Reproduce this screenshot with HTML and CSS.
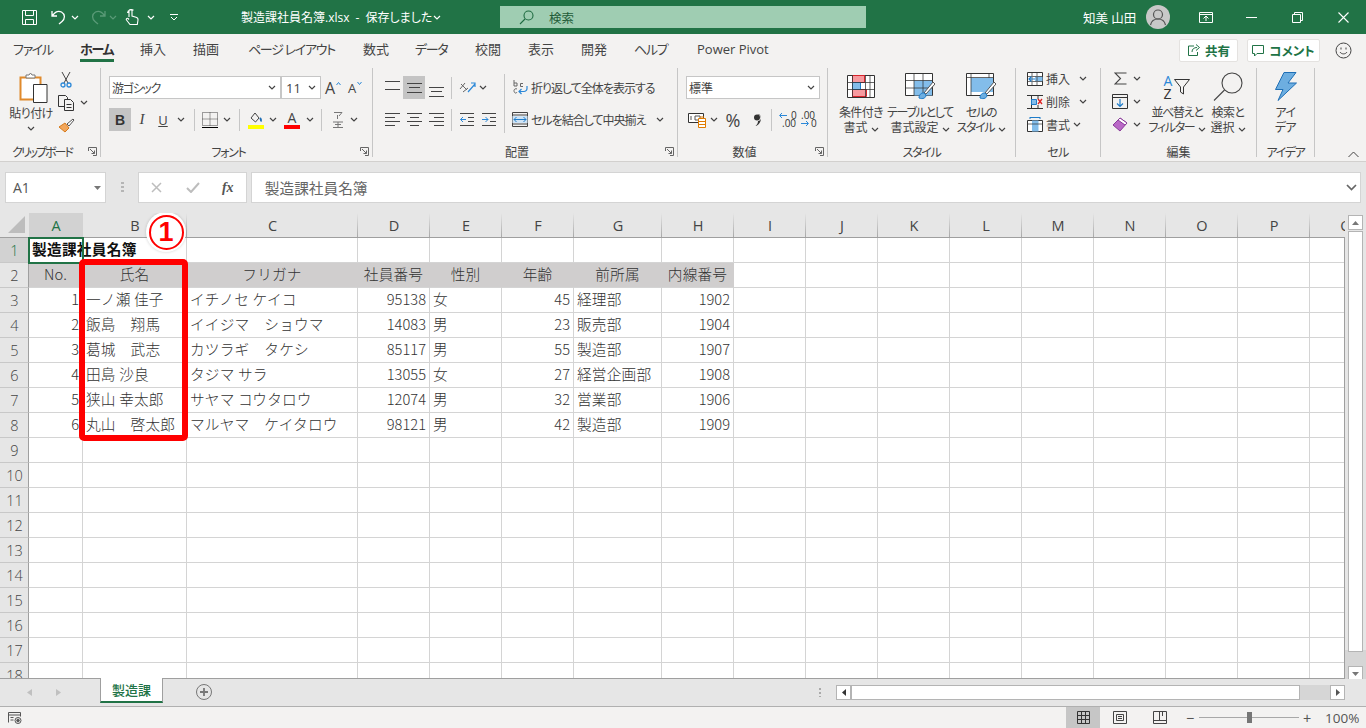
FILE: index.html
```html
<!DOCTYPE html>
<html lang="ja">
<head>
<meta charset="utf-8">
<title>製造課社員名簿.xlsx - Excel</title>
<link rel="stylesheet" href="styles.css">
</head>
<body>
<svg class="defs" width="0" height="0"><symbol id="ch" viewBox="0 0 8 5"><path d="M1 1l3 3 3-3" fill="none" stroke="currentColor" stroke-width="1.2"/></symbol><symbol id="launch" viewBox="0 0 9 9"><path d="M.5 4V.5h8v8H5M2 2l4.500 4.500M6.500 3.500v3h-3" fill="none" stroke="#666"/></symbol></svg>
<div class="app">
<header class="titlebar">
  <div class="qat">
    <svg class="q-save" width="17" height="17" viewBox="0 0 17 17" fill="none" stroke="#fff"><path d="M1.500 1.500h14v14h-14zM4.500 1.500v5h8v-5M4.500 15.500v-5h8v5"/></svg>
    <svg class="q-undo" width="16" height="16" viewBox="0 0 16 16" fill="none" stroke="#fff" stroke-width="1.300"><path d="M1 2v5h5M1.500 6.500C4 3 7.500 1.500 10.500 3c3.500 2 4 6.500.5 9.500l-3 2.500"/></svg>
    <svg class="chev q-c1"><use href="#ch"/></svg>
    <svg class="q-redo" width="16" height="16" viewBox="0 0 16 16" fill="none" stroke="#5a9a77" stroke-width="1.300"><path d="M15 2v5h-5M14.500 6.500C12 3 8.500 1.500 5.500 3 2 5 1.500 9.500 5 12.500L8 15"/></svg>
    <svg class="chev q-c2 dim"><use href="#ch"/></svg>
    <svg class="q-touch" width="14" height="18" viewBox="0 0 14 18" fill="none" stroke="#fff" stroke-width="1.100"><path d="M4 9V3a1.500 1.500 0 0 1 3 0v5l4 1.200c1.500.5 2.200 1.300 2 2.800l-.7 4.500H5L1.500 12c-.8-1 .5-2.300 1.500-1.500L4 11.500M2.500 5a4 4 0 0 1 6-2.800"/></svg>
    <svg class="chev q-c3"><use href="#ch"/></svg>
    <svg class="q-more" width="8" height="7" viewBox="0 0 8 7" fill="none" stroke="#fff"><path d="M0 .5h8M1 3l3 3 3-3"/></svg>
  </div>
  <div class="doc-title">製造課社員名簿.xlsx - 保存しました</div>
  <svg class="chev doc-ch"><use href="#ch"/></svg>
  <div class="search">
    <svg width="15" height="15" viewBox="0 0 15 15" fill="none" stroke="#1f6b41" stroke-width="1.100"><circle cx="9.500" cy="5.500" r="4.500"/><path d="M6 9l-5 5"/></svg>
    <span>検索</span>
  </div>
  <div class="user">知美 山田</div>
  <div class="avatar"><svg width="24" height="24" viewBox="0 0 24 24" fill="none" stroke="#555" stroke-width="1.200"><circle cx="12" cy="9.500" r="4.500"/><path d="M4.500 20c1-4.500 4-6 7.500-6s6.500 1.500 7.500 6"/></svg></div>
  <div class="winbtns">
    <svg width="14" height="11" viewBox="0 0 14 11" fill="none" stroke="#fff"><path d="M.5 .5h13v10H.5zM.5 2.500h13M4.500 6.500L7 4l2.500 2.500M7 4v5"/></svg>
    <svg width="11" height="1" viewBox="0 0 11 1" stroke="#fff"><path d="M0 .5h11"/></svg>
    <svg width="11" height="11" viewBox="0 0 11 11" fill="none" stroke="#fff"><path d="M.5 2.500h8v8h-8zM2.500 2.500v-2h8v8h-2"/></svg>
    <svg width="11" height="11" viewBox="0 0 11 11" fill="none" stroke="#fff" stroke-width="1.100"><path d="M.5 .5l10 10M10.500 .5l-10 10"/></svg>
  </div>
</header>

<nav class="tabs">
  <span class="tab kn t1">ファイル</span>
  <span class="tab kn t2 on">ホーム</span>
  <span class="tab t3">挿入</span>
  <span class="tab t4">描画</span>
  <span class="tab kn t5">ページ レイアウト</span>
  <span class="tab t6">数式</span>
  <span class="tab kn t7">データ</span>
  <span class="tab t8">校閲</span>
  <span class="tab t9">表示</span>
  <span class="tab t10">開発</span>
  <span class="tab kn t11">ヘルプ</span>
  <span class="tab t12">Power Pivot</span>
  <span class="tab-right">
    <span class="pill share"><svg width="14" height="14" viewBox="0 0 14 14" fill="none" stroke="#217346"><path d="M7 3H1.500v9.500h9V9M5 9c0-3 2-4.500 5-4.500M9 1.500l3.500 3-3.500 3"/></svg>共有</span>
    <span class="pill comment"><svg width="13" height="13" viewBox="0 0 13 13" fill="none" stroke="#217346"><path d="M.5 1.500h11v8H5L2.500 12V9.500h-2z"/></svg>コメント</span>
    <svg class="smile" width="17" height="17" viewBox="0 0 17 17" fill="none" stroke="#444"><circle cx="8.500" cy="8.500" r="7.500"/><path d="M5 10c1.500 2.500 5.500 2.500 7 0"/><path d="M6 5.500v2M11 5.500v2"/></svg>
  </span>
</nav>

<section class="ribbon">
  <div class="grp g-clip">
    <div class="gbody clip">
      <div class="paste">
        <svg width="29" height="31" viewBox="0 0 29 31"><path d="M1.500 5.500h20v22h-20z" fill="#fff" stroke="#e08a2c" stroke-width="2"/><path d="M7 5V3h3l1.500-2 1.500 2h3v3H7z" fill="#fff" stroke="#777"/><path d="M14.500 12.500h13.500v18h-13.500z" fill="#fff" stroke="#333"/></svg>
        <div class="lbl tight">貼り付け</div>
        <svg class="chev"><use href="#ch"/></svg>
      </div>
      <div class="clip-col">
        <span class="ci"><svg width="12" height="16" viewBox="0 0 12 16" fill="none"><path d="M2 0l6 11M10 0L4 11" stroke="#444"/><circle cx="3" cy="13" r="2" stroke="#2b88d8" stroke-width="1.300"/><circle cx="9" cy="13" r="2" stroke="#2b88d8" stroke-width="1.300"/></svg></span>
        <span class="ci"><svg class="cp" width="17" height="16" viewBox="0 0 17 16" fill="#f3f2f1" stroke="#333"><path d="M.5 .5h7l2 2v9h-9z"/><path d="M6.500 4.500h6l3 3v8h-9z"/><path d="M8.500 9.500h5M8.500 12.500h5" /></svg><svg class="chev"><use href="#ch"/></svg></span>
        <span class="ci"><svg width="17" height="15" viewBox="0 0 17 15"><path d="M1 9l6-4 4 5-4 4z" fill="#f2a65a" stroke="#d67a1c"/><path d="M9 6l6-5 1 1-5 6z" fill="#fff" stroke="#555"/></svg></span>
      </div>
    </div>
    <div class="glabel kn2">クリップボード<svg class="launch"><use href="#launch"/></svg></div>
  </div>

  <div class="grp g-font">
    <div class="gbody rows2 pl8">
      <div class="rw">
        <span class="sel w172"><span class="seltxt kn">游ゴシック</span><svg class="chev"><use href="#ch"/></svg></span>
        <span class="sel w40"><span class="seltxt num">11</span><svg class="chev"><use href="#ch"/></svg></span>
        <span class="ib w24 aa">A<svg class="up" width="5" height="3" viewBox="0 0 5 3"><path d="M.5 3l2-2.500 2 2.500" fill="none" stroke="#2b88d8"/></svg></span>
        <span class="ib w20 aa sm">A<svg class="up" width="5" height="3" viewBox="0 0 5 3"><path d="M.5 0l2 2.500 2-2.500" fill="none" stroke="#2b88d8"/></svg></span>
      </div>
      <div class="rw">
        <span class="ib w22 sel-on b">B</span>
        <span class="ib w22 i">I</span>
        <span class="ib w20 u">U</span>
        <span class="ib w16"><svg class="chev"><use href="#ch"/></svg></span>
        <span class="vs m5"></span>
        <span class="ib w20"><svg width="16" height="16" viewBox="0 0 16 16" fill="none" stroke="#444" stroke-dasharray="1 1"><path d="M.5 .5h15v13H.5zM8 .5v13M.5 7h15"/><path d="M0 15.500h16" stroke="#000" stroke-dasharray="none"/></svg></span>
        <span class="ib w14"><svg class="chev"><use href="#ch"/></svg></span>
        <span class="vs m6"></span>
        <span class="ib w20"><svg width="16" height="18" viewBox="0 0 16 18"><path d="M3 7l4-5 4 5-3.500 4z" fill="none" stroke="#444"/><path d="M12 7c1 1 1.500 2 1 3.500" fill="none" stroke="#1f6fb5" stroke-width="2"/><path d="M0 14h16v4H0z" fill="#ffff00"/></svg></span>
        <span class="ib w14"><svg class="chev"><use href="#ch"/></svg></span>
        <span class="ib w24 fcolor"><span>A</span><i></i></span>
        <span class="ib w12"><svg class="chev"><use href="#ch"/></svg></span>
        <span class="vs m6"></span>
        <span class="ib w20 phon"><svg width="10" height="18" viewBox="0 0 10 18" fill="none" stroke="#777"><path d="M1 1.500h8L6 5M4.500 4v4M0 11h10M2 13.500h6M0 16.500h10M5 11v5"/></svg></span>
        <span class="ib w12"><svg class="chev"><use href="#ch"/></svg></span>
      </div>
    </div>
    <div class="glabel kn">フォント<svg class="launch"><use href="#launch"/></svg></div>
  </div>

  <div class="grp g-align">
    <div class="gbody align">
      <div class="rows2 al-left">
        <div class="rw">
          <span class="ib w22"><svg class="ln" width="15" height="14" viewBox="0 0 15 14"><path d="M0 .5h15M0 8.500h15"/></svg></span>
          <span class="ib w22 sel-on"><svg class="ln" width="15" height="10" viewBox="0 0 15 10"><path d="M0 .5h15M2 4.500h11M0 9.500h15"/></svg></span>
          <span class="ib w22"><svg class="ln" width="15" height="10" viewBox="0 0 15 10" style="margin-top:8px"><path d="M0 .5h15M2 4.500h11M0 9.500h15"/></svg></span>
          <span class="vs m4"></span>
          <span class="ib w22"><svg width="17" height="15" viewBox="0 0 17 15" fill="none"><path d="M1 9L6 3M2 4l6 6M4 12l5-4" stroke="#666"/><path d="M9 12L16 4M12 3h4v4" stroke="#2b88d8" stroke-width="1.200"/></svg></span>
          <span class="ib w10"><svg class="chev"><use href="#ch"/></svg></span>
        </div>
        <div class="rw">
          <span class="ib w22"><svg class="ln" width="15" height="13" viewBox="0 0 15 13"><path d="M0 .5h15M0 4.500h10M0 8.500h15M0 12.500h10"/></svg></span>
          <span class="ib w22"><svg class="ln" width="15" height="13" viewBox="0 0 15 13"><path d="M0 .5h15M3 4.500h9M0 8.500h15M3 12.500h9"/></svg></span>
          <span class="ib w22"><svg class="ln" width="15" height="13" viewBox="0 0 15 13"><path d="M0 .5h15M5 4.500h10M0 8.500h15M5 12.500h10"/></svg></span>
          <span class="vs m4"></span>
          <span class="ib w22"><svg width="14" height="13" viewBox="0 0 14 13" fill="none" stroke="#444"><path d="M0 .5h14M8 4.500h6M8 8.500h6M0 12.500h14"/><path d="M6 6.500H.5M3 4L.5 6.500 3 9" stroke="#2b88d8"/></svg></span>
          <span class="ib w22"><svg width="14" height="13" viewBox="0 0 14 13" fill="none" stroke="#444"><path d="M0 .5h14M8 4.500h6M8 8.500h6M0 12.500h14"/><path d="M0 6.500h6M3.500 4L6 6.500 3.500 9" stroke="#2b88d8"/></svg></span>
        </div>
      </div>
      <span class="vs tall"></span>
      <div class="rows2 al-right">
        <div class="rw">
          <span class="ib w20"><svg width="15" height="15" viewBox="0 0 15 15" fill="none"><path d="M1 0v6M1 3h3v3H1" stroke="#666"/><path d="M10 3.500H7.500v3H10M4 9a2 2 0 0 0-3 1.500C1 13 3 14 4 12" stroke="#666"/><path d="M14 6v2.500a3 3 0 0 1-3 3H6.500M8.500 9l-2.500 2.500L8.500 14" stroke="#2b88d8" stroke-width="1.200"/></svg></span>
          <span class="rtext wrap">折り返して全体を表示する</span>
        </div>
        <div class="rw">
          <span class="ib w20"><svg width="16" height="15" viewBox="0 0 16 15" fill="none" stroke="#444"><path d="M.5 .5h15v14H.5z"/><path d="M0 3h16M0 12h16" stroke-width="1"/><path d="M.5 4h15v7H.5z" fill="#cfe4f6" stroke="none"/><path d="M2 7.500h12M4.500 5L2 7.500 4.500 10M11.500 5L14 7.500 11.500 10" stroke="#1f7cc9"/></svg></span>
          <span class="rtext merge">セルを結合して中央揃え</span>
          <span class="ib w10"><svg class="chev"><use href="#ch"/></svg></span>
        </div>
      </div>
    </div>
    <div class="glabel">配置<svg class="launch"><use href="#launch"/></svg></div>
  </div>

  <div class="grp g-num">
    <div class="gbody rows2 pl8">
      <div class="rw"><span class="sel w133"><span class="seltxt">標準</span><svg class="chev"><use href="#ch"/></svg></span></div>
      <div class="rw">
        <span class="ib w24"><svg width="20" height="17" viewBox="0 0 20 17"><path d="M.5 2.500h15v9H.5z" fill="#fff" stroke="#333"/><path d="M3 5v4M7 5h5v4H7z" fill="none" stroke="#555"/><path d="M10.500 7.500h7v9h-7z" fill="#fff" stroke="#e07b00"/><path d="M11 10.500h6M11 13.500h6M12 6h4" stroke="#e07b00" fill="none"/></svg></span>
        <span class="ib w8"><svg class="chev"><use href="#ch"/></svg></span>
        <span class="ib w30 pct">%</span>
        <span class="ib w18"><svg width="7" height="12" viewBox="0 0 7 12"><path d="M2.500 0a3.500 3.500 0 0 1 1.500 7C4 9 3 11 1.500 12 5 11 7 7.500 6.800 4.500 6.500 1 4.500 0 2.500 0z" fill="#333"/><circle cx="3" cy="3.500" r="3" fill="#333"/></svg></span>
        <span class="vs m5"></span>
        <span class="ib w22 dec inc"><svg width="15" height="16" viewBox="0 0 15 16" fill="none"><path d="M1 3.500h7M3 1L.5 3.500 3 6" stroke="#2b88d8"/></svg><b class="d1">0</b><b class="d2">.00</b></span>
        <span class="ib w18 dec out"><b class="d3">.00</b><svg width="15" height="16" viewBox="0 0 15 16" fill="none"><path d="M0 12.500h7M5 10l2.500 2.500L5 15" stroke="#2b88d8"/></svg><b class="d4">0</b></span>
      </div>
    </div>
    <div class="glabel">数値<svg class="launch"><use href="#launch"/></svg></div>
  </div>

  <div class="grp g-style">
    <div class="gbody bigs pl8">
      <div class="big w50">
        <div class="bi"><svg width="28" height="23" viewBox="0 0 28 23"><path d="M.5 .5h27v22H.5z" fill="#fff" stroke="#333"/><path d="M5.500 .5h12v7h-12zM5.500 14.500h14v7h-14z" fill="#f79a9f" stroke="#d8232a"/><path d="M5.500 7.500h8v7h-8z" fill="#83bdea" stroke="#1f7cc9"/><path d="M5.500 0v23M18.500 0v23M23 0v23M0 7.500h28M0 14.500h28" stroke="#333" fill="none" opacity=".75"/></svg></div>
        <div class="lbl"><span class="tight">条件付き</span><br>書式 <svg class="chev"><use href="#ch"/></svg></div>
      </div>
      <div class="big w68">
        <div class="bi"><svg width="30" height="27" viewBox="0 0 30 27"><path d="M.5 .5h27v22H.5z" fill="#fff" stroke="#333"/><path d="M9 7.500h18v15H9z" fill="#83bdea"/><path d="M9 0v23M18 0v23M0 7.500h28M0 15h28" stroke="#333" fill="none" opacity=".75"/><path d="M19 20l9-11 2 2-9 10z" fill="#fff" stroke="#555"/><path d="M14 25c0-3 2-5.500 5-5l2 2c0 3-3 4.500-7 3z" fill="#6daee0" stroke="#1f7cc9"/></svg></div>
        <div class="lbl"><span class="kn">テーブルとして</span><br>書式設定 <svg class="chev"><use href="#ch"/></svg></div>
      </div>
      <div class="big w54">
        <div class="bi"><svg width="30" height="27" viewBox="0 0 30 27"><path d="M.5 .5h27v22H.5z" fill="#fff" stroke="#333"/><path d="M5 5h22v14H5z" fill="#83bdea"/><path d="M0 4.500h28M5 0v23M23 0v5" stroke="#333" fill="none" opacity=".75"/><path d="M19 20l9-11 2 2-9 10z" fill="#fff" stroke="#555"/><path d="M14 25c0-3 2-5.500 5-5l2 2c0 3-3 4.500-7 3z" fill="#6daee0" stroke="#1f7cc9"/></svg></div>
        <div class="lbl"><span class="kn">セルの</span><br><span class="kn">スタイル</span> <svg class="chev"><use href="#ch"/></svg></div>
      </div>
    </div>
    <div class="glabel plain kn">スタイル</div>
  </div>

  <div class="grp g-cell">
    <div class="gbody rows3">
      <div class="rw3"><span class="ic"><svg width="16" height="14" viewBox="0 0 16 14"><path d="M.5 .5h15v13H.5z" fill="#fff" stroke="#333"/><path d="M8 4.500h7.500v5H8z" fill="#83bdea"/><path d="M5 0v14M10 0v14M0 4.500h16M0 9.500h16" stroke="#333" opacity=".7"/><path d="M8 7H2M4.500 4.500L2 7l2.500 2.500" fill="none" stroke="#1f7cc9" stroke-width="1.200"/></svg></span><span class="ct w31">挿入</span><span class="ib w12"><svg class="chev"><use href="#ch"/></svg></span></div>
      <div class="rw3"><span class="ic"><svg width="16" height="14" viewBox="0 0 16 14"><path d="M0 .5h16M0 13.500h16M4.500 0v14M11 0v4M11 10v4" stroke="#333"/><path d="M4.500 4.500h5v5h-5z" fill="#83bdea" stroke="#1f7cc9"/><path d="M11 4l4 5M15 4l-4 5" stroke="#e02020" stroke-width="1.300"/></svg></span><span class="ct w31">削除</span><span class="ib w12"><svg class="chev"><use href="#ch"/></svg></span></div>
      <div class="rw3"><span class="ic"><svg width="16" height="15" viewBox="0 0 16 15"><path d="M.5 3.500h15v11H.5z" fill="#fff" stroke="#333"/><path d="M5 3.500h6.500v11H5z" fill="#83bdea"/><path d="M0 7h16" stroke="#333" opacity=".7"/><path d="M3 .5h10M3 0v2M13 0v2" stroke="#1f7cc9"/></svg></span><span class="ct w25">書式</span><span class="ib w12"><svg class="chev"><use href="#ch"/></svg></span></div>
    </div>
    <div class="glabel plain tight">セル</div>
  </div>

  <div class="grp g-edit">
    <div class="gbody edit">
      <div class="rows3">
        <div class="rw3"><span class="ib w22"><svg width="13" height="13" viewBox="0 0 13 13" fill="none" stroke="#444" stroke-width="1.100"><path d="M12.500 1H1l5.500 5.500L1 12h11.500"/></svg></span><span class="ib w12"><svg class="chev"><use href="#ch"/></svg></span></div>
        <div class="rw3"><span class="ib w22"><svg width="16" height="15" viewBox="0 0 16 15" fill="none" stroke="#333"><path d="M.5 .5h15v14H.5zM0 3.500h16"/><path d="M8 5v7M5 9.500l3 3 3-3" stroke="#1f7cc9" stroke-width="1.200"/></svg></span><span class="ib w12"><svg class="chev"><use href="#ch"/></svg></span></div>
        <div class="rw3"><span class="ib w22"><svg width="16" height="15" viewBox="0 0 16 15"><path d="M1 8l7-7 7 5-7 8z" fill="#b968c7" stroke="#8a3b9a"/><path d="M6 3l7 5 2-2-7-5z" fill="#fff" stroke="#8a3b9a"/></svg></span><span class="ib w12"><svg class="chev"><use href="#ch"/></svg></span></div>
      </div>
      <div class="big w60 sortcol">
        <div class="bi"><span class="sort"><b>A</b><b class="z">Z</b></span><svg width="16" height="16" viewBox="0 0 16 16" fill="none" stroke="#333"><path d="M.5 .5h15L9.500 8v7l-3-2V8z"/></svg></div>
        <div class="lbl"><span class="kn">並べ替えと</span><br><span class="kn">フィルター</span> <svg class="chev"><use href="#ch"/></svg></div>
      </div>
      <div class="big w42">
        <div class="bi"><svg width="30" height="29" viewBox="0 0 30 29" fill="none" stroke="#444" stroke-width="1.100"><circle cx="19" cy="11" r="10"/><path d="M11.500 18L1 28.500"/></svg></div>
        <div class="lbl"><span class="tight">検索と</span><br>選択 <svg class="chev"><use href="#ch"/></svg></div>
      </div>
    </div>
    <div class="glabel plain">編集</div>
  </div>

  <div class="grp g-idea">
    <div class="gbody bigs center">
      <div class="big w58">
        <div class="bi"><svg width="22" height="29" viewBox="0 0 22 29"><path d="M9 .5h12L13 11h8.500L3 28.500l5-11H.5z" fill="#6daee0" stroke="#1f6fb5"/></svg></div>
        <div class="lbl tight">アイ<br>デア</div>
      </div>
    </div>
    <div class="glabel plain kn">アイデア</div>
  </div>
  <svg class="collapse" width="11" height="7" viewBox="0 0 11 7" fill="none" stroke="#444"><path d="M.5 6l5-5 5 5"/></svg>
</section>

<section class="fbar">
  <div class="namebox"><span>A1</span><svg width="7" height="4" viewBox="0 0 7 4"><path d="M0 0h7L3.500 4z" fill="#777"/></svg></div>
  <div class="fdots"></div>
  <div class="fbtns">
    <svg width="11" height="11" viewBox="0 0 11 11" fill="none" stroke="#bdbdbd" stroke-width="1.500"><path d="M1 1l9 9M10 1l-9 9"/></svg>
    <svg width="14" height="11" viewBox="0 0 14 11" fill="none" stroke="#bdbdbd" stroke-width="2"><path d="M1 6l4 4 8-9"/></svg>
    <span class="fx">fx</span>
  </div>
  <div class="finput"><span>製造課社員名簿</span><svg width="11" height="7" viewBox="0 0 11 7" fill="none" stroke="#666" stroke-width="1.700"><path d="M1 1l4.500 4.500L10 1"/></svg></div>
</section>

<main class="workspace">
  <div class="sheet">
    <div class="grid-row head">
      <div class="corner"><svg width="17" height="17" viewBox="0 0 17 17"><path d="M17 0v17H0z" fill="#bdbdbd"/></svg></div>
      <div class="hc on">A</div><div class="hc">B</div><div class="hc">C</div><div class="hc">D</div><div class="hc">E</div><div class="hc">F</div><div class="hc">G</div><div class="hc">H</div><div class="hc">I</div><div class="hc">J</div><div class="hc">K</div><div class="hc">L</div><div class="hc">M</div><div class="hc">N</div><div class="hc">O</div><div class="hc">P</div><div class="hc">Q</div>
    </div>
    <div class="rows">
      <div class="grid-row"><div class="rh on">1</div><div class="c title">製造課社員名簿</div><i></i><i></i><i></i><i></i><i></i><i></i><i></i><i></i><i></i><i></i><i></i><i></i><i></i><i></i><i></i><i></i></div>
      <div class="grid-row band"><div class="rh">2</div><div class="c m">No.</div><div class="c m">氏名</div><div class="c m">フリガナ</div><div class="c m">社員番号</div><div class="c m">性別</div><div class="c m">年齢</div><div class="c m">前所属</div><div class="c m">内線番号</div><i></i><i></i><i></i><i></i><i></i><i></i><i></i><i></i><i></i></div>
      <div class="grid-row"><div class="rh">3</div><div class="c r">1</div><div class="c">一ノ瀬 佳子</div><div class="c">イチノセ ケイコ</div><div class="c r">95138</div><div class="c">女</div><div class="c r">45</div><div class="c">経理部</div><div class="c r">1902</div><i></i><i></i><i></i><i></i><i></i><i></i><i></i><i></i><i></i></div>
      <div class="grid-row"><div class="rh">4</div><div class="c r">2</div><div class="c">飯島　翔馬</div><div class="c">イイジマ　ショウマ</div><div class="c r">14083</div><div class="c">男</div><div class="c r">23</div><div class="c">販売部</div><div class="c r">1904</div><i></i><i></i><i></i><i></i><i></i><i></i><i></i><i></i><i></i></div>
      <div class="grid-row"><div class="rh">5</div><div class="c r">3</div><div class="c">葛城　武志</div><div class="c">カツラギ　タケシ</div><div class="c r">85117</div><div class="c">男</div><div class="c r">55</div><div class="c">製造部</div><div class="c r">1907</div><i></i><i></i><i></i><i></i><i></i><i></i><i></i><i></i><i></i></div>
      <div class="grid-row"><div class="rh">6</div><div class="c r">4</div><div class="c">田島 沙良</div><div class="c">タジマ サラ</div><div class="c r">13055</div><div class="c">女</div><div class="c r">27</div><div class="c">経営企画部</div><div class="c r">1908</div><i></i><i></i><i></i><i></i><i></i><i></i><i></i><i></i><i></i></div>
      <div class="grid-row"><div class="rh">7</div><div class="c r">5</div><div class="c">狭山 幸太郎</div><div class="c">サヤマ コウタロウ</div><div class="c r">12074</div><div class="c">男</div><div class="c r">32</div><div class="c">営業部</div><div class="c r">1906</div><i></i><i></i><i></i><i></i><i></i><i></i><i></i><i></i><i></i></div>
      <div class="grid-row"><div class="rh">8</div><div class="c r">6</div><div class="c">丸山　啓太郎</div><div class="c">マルヤマ　ケイタロウ</div><div class="c r">98121</div><div class="c">男</div><div class="c r">42</div><div class="c">製造部</div><div class="c r">1909</div><i></i><i></i><i></i><i></i><i></i><i></i><i></i><i></i><i></i></div>
      <div class="grid-row"><div class="rh">9</div><i></i><i></i><i></i><i></i><i></i><i></i><i></i><i></i><i></i><i></i><i></i><i></i><i></i><i></i><i></i><i></i><i></i></div>
      <div class="grid-row"><div class="rh">10</div><i></i><i></i><i></i><i></i><i></i><i></i><i></i><i></i><i></i><i></i><i></i><i></i><i></i><i></i><i></i><i></i><i></i></div>
      <div class="grid-row"><div class="rh">11</div><i></i><i></i><i></i><i></i><i></i><i></i><i></i><i></i><i></i><i></i><i></i><i></i><i></i><i></i><i></i><i></i><i></i></div>
      <div class="grid-row"><div class="rh">12</div><i></i><i></i><i></i><i></i><i></i><i></i><i></i><i></i><i></i><i></i><i></i><i></i><i></i><i></i><i></i><i></i><i></i></div>
      <div class="grid-row"><div class="rh">13</div><i></i><i></i><i></i><i></i><i></i><i></i><i></i><i></i><i></i><i></i><i></i><i></i><i></i><i></i><i></i><i></i><i></i></div>
      <div class="grid-row"><div class="rh">14</div><i></i><i></i><i></i><i></i><i></i><i></i><i></i><i></i><i></i><i></i><i></i><i></i><i></i><i></i><i></i><i></i><i></i></div>
      <div class="grid-row"><div class="rh">15</div><i></i><i></i><i></i><i></i><i></i><i></i><i></i><i></i><i></i><i></i><i></i><i></i><i></i><i></i><i></i><i></i><i></i></div>
      <div class="grid-row"><div class="rh">16</div><i></i><i></i><i></i><i></i><i></i><i></i><i></i><i></i><i></i><i></i><i></i><i></i><i></i><i></i><i></i><i></i><i></i></div>
      <div class="grid-row"><div class="rh">17</div><i></i><i></i><i></i><i></i><i></i><i></i><i></i><i></i><i></i><i></i><i></i><i></i><i></i><i></i><i></i><i></i><i></i></div>
      <div class="grid-row"><div class="rh">18</div><i></i><i></i><i></i><i></i><i></i><i></i><i></i><i></i><i></i><i></i><i></i><i></i><i></i><i></i><i></i><i></i><i></i></div>
    </div>
    <div class="cursor"></div>
    <div class="callout-box"></div>
    <div class="badge"><span>1</span></div>
  </div>
  <div class="vscroll">
    <span class="sbtn"><svg width="7" height="4" viewBox="0 0 7 4"><path d="M0 4h7L3.500 0z" fill="#777"/></svg></span>
    <span class="vthumb"></span>
    <span class="sbtn"><svg width="7" height="4" viewBox="0 0 7 4"><path d="M0 0h7L3.500 4z" fill="#777"/></svg></span>
  </div>
</main>

<section class="tabbar">
  <svg class="nav-l" width="5" height="7" viewBox="0 0 5 7"><path d="M5 0v7L0 3.500z" fill="#c0c0c0"/></svg>
  <svg class="nav-r" width="5" height="7" viewBox="0 0 5 7"><path d="M0 0v7l5-3.500z" fill="#c0c0c0"/></svg>
  <div class="sheet-tab">製造課</div>
  <svg class="add" width="16" height="16" viewBox="0 0 16 16" fill="none" stroke="#777"><circle cx="8" cy="8" r="7.500"/><path d="M8 4v8M4 8h8" stroke-width="1.800"/></svg>
  <div class="hdots"></div>
  <div class="hscroll">
    <span class="sbtn h"><svg width="4" height="7" viewBox="0 0 4 7"><path d="M4 0v7L0 3.500z" fill="#333"/></svg></span>
    <span class="hthumb"></span>
    <span class="sbtn h"><svg width="4" height="7" viewBox="0 0 4 7"><path d="M0 0v7l4-3.500z" fill="#555"/></svg></span>
  </div>
</section>

<footer class="status">
  <svg class="macro" width="14" height="12" viewBox="0 0 14 12" fill="none" stroke="#555"><path d="M.5 10.500v-10h12v4M.5 3h12M2.500 5.500h3M2.500 8h3"/><circle cx="10" cy="8.500" r="3" /><circle cx="10" cy="8.500" r="1.300" fill="#555"/></svg>
  <div class="views">
    <span class="view on"><svg width="13" height="13" viewBox="0 0 13 13" fill="none" stroke="#333"><path d="M.5 .5h12v12H.5zM4.500 0v13M8.500 0v13M0 4.500h13M0 8.500h13"/></svg></span>
    <span class="view"><svg width="14" height="13" viewBox="0 0 14 13" fill="none" stroke="#444"><path d="M.5 .5h13v12H.5zM3.500 3.500h7v6h-7zM5 5.500h4M5 7.500h4"/></svg></span>
    <span class="view"><svg width="14" height="13" viewBox="0 0 14 13" fill="none" stroke="#444"><path d="M.5 .5h13v12H.5zM.5 9.500h13M6.500 0v9.500M9.500 0v5"/></svg></span>
  </div>
  <div class="zoom">
    <span class="zbtn">−</span>
    <span class="slider"><i></i></span>
    <span class="zbtn">+</span>
    <span class="pctz">100%</span>
  </div>
</footer>
</div>
</body>
</html>
```
FILE: styles.css
```css
*{box-sizing:border-box}
html,body{margin:0;height:100%;overflow:hidden}
body{font-family:"Open Sans","Noto Sans CJK JP",sans-serif;font-size:12px;color:#444;font-feature-settings:"palt"}
.defs{position:absolute}
.app{width:1366px;height:728px;display:flex;flex-direction:column;overflow:hidden;background:#e6e6e6}
.chev{width:8px;height:5px;color:#444;display:inline-block;flex:none}
.kn{letter-spacing:-1.300px}
.kn2{letter-spacing:-2px}
.tight{letter-spacing:-.6px}

/* title bar */
.titlebar{height:34px;background:#217346;color:#fff;display:flex;align-items:center;flex:none;font-size:12px}
.titlebar .chev{color:#fff}
.titlebar .chev.dim{color:#5a9a77}
.qat{width:241px;height:34px;display:flex;align-items:center;padding-left:21px}
.q-undo{margin-left:13px}
.q-c1{margin-left:4px}
.q-redo{margin-left:11px}
.q-c2{margin-left:3px}
.q-touch{margin-left:8px}
.q-c3{margin-left:8px}
.q-more{margin-left:15px}
.doc-title{width:192px;white-space:nowrap;word-spacing:3px}
.search{margin-left:59px;width:366px;height:22px;background:#9fcdb2;color:#1f5c39;display:flex;align-items:center;padding-left:19px;gap:15px;font-size:12.500px}
.user{margin-left:217px;width:60px;font-size:12.500px;white-space:nowrap}
.avatar{margin-left:3px;width:24px;height:24px;border-radius:50%;background:#c8c8c8}
.avatar svg{display:block}
.winbtns{margin-left:24px;flex:1;display:flex;align-items:center;padding-left:5px}
.winbtns svg:nth-child(2){margin-left:33px}
.winbtns svg:nth-child(3){margin-left:35px}
.winbtns svg:nth-child(4){margin-left:35px}

/* tabs */
.tabs{height:32px;background:#f3f2f1;display:flex;align-items:center;flex:none;font-size:13px;color:#444;position:relative}
.tab{height:32px;line-height:30px;white-space:nowrap;position:relative;flex:none}
.t1{margin-left:13px;width:38px}
.t2{margin-left:29px;width:34px}
.t3{margin-left:26px;width:26px}
.t4{margin-left:27px;width:26px}
.t5{margin-left:29px;width:86px}
.t6{margin-left:29px;width:26px}
.t7{margin-left:26px;width:32px}
.t8{margin-left:28px;width:26px}
.t9{margin-left:27px;width:26px}
.t10{margin-left:27px;width:26px}
.t11{margin-left:27px;width:32px}
.t12{margin-left:31px;width:76px}
.tab.on{font-weight:700;color:#333}
.tab.on::after{content:"";position:absolute;left:0;right:0;top:25px;height:3px;background:#217346}
.tab-right{margin-left:auto;display:flex;align-items:center;padding-right:14px}
.pill{height:23px;background:#fff;border:1px solid #e4e2e0;border-radius:2px;display:flex;align-items:center;color:#217346;font-weight:700;font-size:12.500px;gap:4px;margin-right:9px;justify-content:center}
.share{width:59px}
.comment{width:73px;margin-right:15px}
.smile{flex:none}

/* ribbon */
.ribbon{height:96px;background:#f3f2f1;border-bottom:1px solid #d2d0ce;display:flex;flex:none;align-items:flex-start;padding-top:2px;color:#444}
.grp{height:89px;border-right:1px solid #c6c6c6;display:flex;flex-direction:column;position:relative;flex:none}
.g-clip{width:101px}
.g-font{width:272px}
.g-align{width:305px}
.g-num{width:150px}
.g-style{width:188px}
.g-cell{width:85px}
.g-edit{width:156px}
.g-idea{width:58px}
.gbody{flex:1;min-height:0;display:flex}
.pl8{padding-left:8px}
.glabel{height:12px;line-height:16px;text-align:center;padding-right:16px;white-space:nowrap;color:#444}
.glabel.plain{padding-right:0}
.launch{position:absolute;width:9px;height:9px;right:3px;bottom:1px}
.lbl{line-height:15px;text-align:center;white-space:nowrap;color:#444}
.collapse{margin-left:33px;margin-top:83px}

.clip{padding-left:8px}
.paste{width:46px;display:flex;flex-direction:column;align-items:center;padding-top:4px}
.paste svg:first-child{margin-left:4px;display:block}
.paste .lbl{margin-top:3px}
.paste .chev{margin-top:5px}
.clip-col{display:flex;flex-direction:column}
.ci{height:23px;display:flex;align-items:center;width:40px;padding-left:4px;gap:5px}
.ci:first-child{padding-left:6px}

.rows2{flex-direction:column;gap:9px;padding-top:8px;display:flex}
.rw{height:23px;display:flex;align-items:center;flex:none}
.ib{display:flex;align-items:center;justify-content:center;height:23px;flex:none;color:#444;position:relative}
.w8{width:8px}.w10{width:10px}.w12{width:12px}.w14{width:14px}.w16{width:16px}.w18{width:18px}.w20{width:20px}.w22{width:22px}.w24{width:24px}.w30{width:30px}
.sel-on{background:#c4c4c4}
.b{font-weight:700;font-family:"Liberation Sans",sans-serif;font-size:14px;color:#333}
.i{font-style:italic;font-family:"Liberation Serif",serif;font-size:15px}
.u{text-decoration:underline;font-size:13px}
.vs{width:1px;height:22px;background:#c6c6c6;flex:none}
.m4{margin:0 4px}
.m5{margin:0 5px}
.m6{margin:0 6px 0 5px}
.sel{height:23px;background:#fff;border:1px solid #c6c6c6;display:flex;align-items:center;justify-content:space-between;padding:0 4px 0 2px;flex:none;font-size:12px;color:#444}
.w172{width:172px}
.w40{width:40px}
.w133{width:134px}
.seltxt{color:#444}
.seltxt.num{font-size:13px;padding-left:2px}
.aa{font-size:16px;color:#444}
.aa.sm{font-size:13px}
.aa .up{margin-left:1px;margin-top:-8px}
.fcolor{flex-direction:column;line-height:13px;font-size:14px}
.fcolor i{display:block;width:16px;height:4px;background:#f00;margin-top:1px}
.ln{fill:none;stroke:#444}
.al-left{width:131px;padding-left:8px;flex:none}
.vs.tall{height:59px;margin-top:6px}
.al-right{padding-left:5px;flex:1}
.rtext{font-size:12px;white-space:nowrap;color:#444;margin-left:1px;letter-spacing:-1px;flex:none}
.wrap{width:126px}
.merge{width:124px}
.pct{font-size:18px;color:#444}
.dec svg{position:absolute;left:2px}
.dec b{position:absolute;font-weight:400;font-size:10px;line-height:10px;color:#333}
.inc svg{top:4px}
.out svg{top:3px}
.d1{left:14px;top:2px}
.d2{left:5px;top:10px}
.d3{left:2px;top:2px}
.d4{left:12px;top:10px}
.bigs{display:flex}
.bigs.center{justify-content:center}
.big{display:flex;flex-direction:column;align-items:center;flex:none}
.bi{height:37px;display:flex;align-items:center;justify-content:center;gap:1px;flex:none}
.w50{width:50px}.w68{width:68px}.w54{width:54px}.w60{width:60px}.w42{width:42px}.w58{width:57px}
.rows3{display:flex;flex-direction:column;margin-top:-1px}
.rw3{height:23px;display:flex;align-items:center}
.g-cell .rows3{padding-left:10px}
.ic{width:18px;display:flex;justify-content:center}
.ct{margin-left:2px;font-size:12px;white-space:nowrap}
.w31{width:31px}.w25{width:25px}
.edit{padding-left:8px}
.sortcol{margin-left:4px}
.edit .rows3{width:34px;flex:none}
.sort{display:flex;flex-direction:column;line-height:13px;font-size:14px;margin-right:1px}
.sort b{font-weight:400;color:#2b88d8}
.sort .z{color:#333}

/* formula bar */
.fbar{height:51px;flex:none;display:flex;align-items:flex-start;padding:10px 5px 0;background:#e6e6e6}
.namebox{width:101px;height:31px;background:#fff;border:1px solid #d4d4d4;display:flex;align-items:center;justify-content:space-between;padding:0 4px 0 7px;font-size:14px;color:#555}
.fdots{width:3px;height:11px;margin:10px 14px 0 15px;background:repeating-linear-gradient(#b5b5b5 0 2px,transparent 2px 4px)}
.fbtns{width:109px;height:31px;background:#fff;border:1px solid #d4d4d4;display:flex;align-items:center;padding-left:12px}
.fbtns svg:nth-child(2){margin-left:24px}
.fx{margin-left:22px;font-family:"Liberation Serif",serif;font-style:italic;font-weight:700;font-size:14px;color:#555}
.finput{margin-left:4px;width:1111px;height:31px;background:#fff;border:1px solid #d4d4d4;display:flex;align-items:center;justify-content:space-between;padding:0 3px 0 13px;font-family:"Noto Sans CJK JP",sans-serif;font-size:14.670px;color:#666;font-feature-settings:normal}

/* sheet */
.workspace{height:466px;flex:none;display:flex}
.sheet{width:1345px;height:466px;position:relative;overflow:hidden;flex:none}
.grid-row{display:grid;grid-template-columns:29px 54px 104px 171px 72px 72px 72px 88px repeat(10,72px);height:25px;width:1455px}
.head{background:#e6e6e6;color:#444;font-size:14.500px}
.corner{display:flex;align-items:flex-end;padding:0 0 4px 8px;border-bottom:1px solid #9f9f9f}
.corner svg{display:block}
.hc{display:flex;align-items:center;justify-content:center;border-bottom:1px solid #9f9f9f;background:linear-gradient(#e6e6e6,#a8a8a8) right/1px 100% no-repeat}
.hc.on{background:#d2d2d2;color:#217346}
.rows{width:1345px;height:441px;overflow:hidden;background:#fff;border-right:1px solid #9f9f9f;border-bottom:1px solid #9f9f9f}
.rows .grid-row{font-family:"Noto Sans CJK JP",sans-serif;font-size:14.670px;color:#333;font-weight:300;font-feature-settings:normal}
.rows i{display:block;border-right:1px solid #d4d4d4;border-bottom:1px solid #d4d4d4}
.rh{background:#e6e6e6;border-right:1px solid #9f9f9f;border-bottom:1px solid #c8c8c8;display:flex;align-items:center;justify-content:center;font-family:"Open Sans",sans-serif;font-size:14.500px;color:#444;padding-left:1px}
.rh.on{background:#d2d2d2;color:#217346}
.c{border-right:1px solid #d4d4d4;border-bottom:1px solid #d4d4d4;line-height:21px;padding:0 3px;white-space:nowrap;min-width:0;letter-spacing:.2px}
.c.r{text-align:right;letter-spacing:0}
.c.m{text-align:center;background:#d0cece;border-right-color:#d0cece}
.c.title{font-weight:700;border-right:0;color:#111;letter-spacing:.3px}
.cursor{position:absolute;left:28px;top:24px;width:56px;height:27px;border:2px solid #217346}
.callout-box{position:absolute;left:79px;top:46px;width:109px;height:182px;border:6.500px solid #f00;border-radius:5px}
.badge{position:absolute;left:146px;top:-1px;width:40px;height:40px;border-radius:50%;background:#fff;box-shadow:0 0 3px rgba(0,0,0,.18);display:flex;align-items:center;justify-content:center}
.badge span{width:35px;height:35px;border-radius:50%;border:2px solid #f00;color:#f00;display:flex;align-items:center;justify-content:center;font-family:"Liberation Sans",sans-serif;font-weight:700;font-size:27px;line-height:1}

.vscroll{width:21px;height:466px;display:flex;flex-direction:column;padding:2px 0 1px 3px;flex:none;background:linear-gradient(#e6e6e6,#e6e6e6) no-repeat,#d6d6d6;background-size:100% 437px,auto}
.sbtn{width:15px;height:15px;background:#fff;border:1px solid #b4b4b4;display:flex;align-items:center;justify-content:center;flex:none}
.vthumb{width:15px;height:421px;margin:1px 0 14px;background:#fff;border:1px solid #b4b4b4;flex:none}

/* sheet tab bar */
.tabbar{height:28px;flex:none;background:#e6e6e6;border-bottom:1px solid #b0b0b0;display:flex;align-items:flex-start;position:relative}
.nav-l{margin:10px 0 0 27px}
.nav-r{margin:10px 0 0 24px}
.sheet-tab{margin:-1px 0 0 39px;width:63px;height:25px;background:#fff;border:1px solid #9f9f9f;border-top:0;border-bottom:2px solid #217346;text-align:center;line-height:23px;font-family:"Noto Sans CJK JP",sans-serif;font-size:13px;color:#217346;font-weight:500;position:relative;flex:none;font-feature-settings:normal}
.add{margin:5px 0 0 33px}
.hdots{width:2px;height:9px;margin:9px 0 0 607px;background:repeating-linear-gradient(#aaa 0 2px,transparent 2px 4px)}
.hscroll{margin:6px 0 0 15px;width:509px;height:15px;display:flex;background:#d6d6d6}
.sbtn.h{width:15px}
.hthumb{width:449px;height:15px;background:#fff;border:1px solid #b4b4b4;flex:none}
.hscroll .sbtn:last-child{margin-left:auto}

/* status */
.status{height:21px;flex:none;background:#f3f2f1;display:flex;align-items:center;position:relative}
.macro{margin-left:8px}
.views{margin-left:1044px;display:flex;height:21px}
.view{width:40px;height:21px;display:flex;align-items:center;justify-content:center}
.view.on{width:34px;background:#c6c6c6}
.zoom{display:flex;align-items:center;margin-left:4px;flex:1}
.zbtn{width:12px;text-align:center;font-size:14px;color:#555;font-family:"Liberation Sans",sans-serif;flex:none}
.slider{width:100px;height:1px;background:#a8a8a8;margin:0 2px 0 3px;position:relative;flex:none}
.slider i{position:absolute;left:48px;top:-5px;width:5px;height:11px;background:#767676}
.pctz{margin-left:12px;font-size:13.500px;color:#555}
```
